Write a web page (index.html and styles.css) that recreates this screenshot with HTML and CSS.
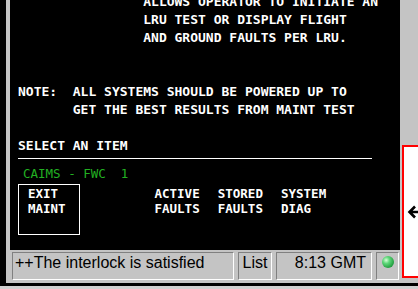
FILE: index.html
```html
<!DOCTYPE html>
<html lang="en">
  <head>
    <meta charset="UTF-8" />
    <meta name="viewport" content="width=device-width, initial-scale=1.0" />
    <title>CAIMS Maint</title>
    <link rel="stylesheet" href="styles.css">
  </head>
  <body>
    <div class="app">
      <div class="main">
        <div class="edge"></div>
        <div class="console">
          <div class="screen">
<pre class="text">                ALLOWS OPERATOR TO INITIATE AN
                LRU TEST OR DISPLAY FLIGHT
                AND GROUND FAULTS PER LRU.


NOTE:  ALL SYSTEMS SHOULD BE POWERED UP TO
       GET THE BEST RESULTS FROM MAINT TEST

SELECT AN ITEM</pre>
            <div class="rule"></div>
            <div class="unit">CAIMS - FWC  1</div>
            <div class="keys">
              <div class="key selected">EXIT<br>MAINT</div>
              <div class="key"></div>
              <div class="key">ACTIVE<br>FAULTS</div>
              <div class="key">STORED<br>FAULTS</div>
              <div class="key">SYSTEM<br>DIAG</div>
            </div>
          </div>
          <div class="status">
            <div class="field message">++The interlock is satisfied</div>
            <div class="field list">List</div>
            <div class="field clock">8:13 GMT</div>
            <div class="field lamp"><span class="led"></span></div>
          </div>
        </div>
        <div class="side">
          <div class="alert">
            <svg width="18" height="14" viewBox="0 0 18 14">
              <path d="M8 1.5 L2.5 7 L8 12.5 M2.5 7 H18" fill="none" stroke="#000" stroke-width="2.6" />
            </svg>
          </div>
        </div>
      </div>
      <div class="divider"></div>
      <div class="foot"></div>
    </div>
  </body>
</html>
```
FILE: styles.css
```css
* {
  box-sizing: border-box;
  margin: 0;
  padding: 0;
}

body {
  background: #000;
  width: 418px;
  height: 289px;
  overflow: hidden;
  font-family: "Liberation Sans", Arial, sans-serif;
}

.app {
  display: flex;
  flex-direction: column;
  height: 289px;
}

.main {
  display: flex;
  height: 283px;
}

.edge {
  width: 6px;
  background: #000;
}

.console {
  width: 394px;
  background: #c4c4c4;
  padding-left: 4px;
  display: flex;
  flex-direction: column;
}

.screen {
  height: 250px;
  background: #000;
  color: #fff;
  padding-left: 8px;
  font-family: "DejaVu Sans Mono", monospace;
  overflow: hidden;
}

.text {
  margin-top: -7px;
  font-family: inherit;
  font-size: 13px;
  font-weight: bold;
  line-height: 18px;
  white-space: pre;
}

.rule {
  margin-top: 3px;
  width: 354px;
  height: 1px;
  background: #fff;
}

.unit {
  margin-top: 7px;
  padding-left: 5px;
  color: #22b022;
  font-size: 12.5px;
  line-height: 15px;
  white-space: pre;
}

.keys {
  margin-top: 3px;
  display: grid;
  grid-template-columns: repeat(5, 63.25px);
}

.key {
  width: 62px;
  height: 51px;
  padding: 1px 0 0 9px;
  border: 1px solid transparent;
  font-size: 12.5px;
  font-weight: bold;
  line-height: 15px;
}

.key.selected {
  border-color: #fff;
}

.status {
  height: 33px;
  display: flex;
  gap: 4px;
  padding: 2px 1px 0 2px;
}

.field {
  height: 28px;
  border: 1px solid;
  border-color: #808080 #fff #fff #808080;
  font-size: 16px;
  line-height: 20px;
  color: #000;
  white-space: nowrap;
}

.message {
  width: 222px;
  padding-left: 2px;
}

.list {
  width: 34px;
  text-align: center;
}

.clock {
  width: 96px;
  text-align: right;
  padding-right: 5px;
}

.lamp {
  width: 23px;
  display: flex;
  justify-content: center;
  padding-top: 3px;
}

.led {
  width: 12px;
  height: 12px;
  border-radius: 50%;
  background: radial-gradient(circle at 35% 35%, #d8ffd8 0, #5fd87a 30%, #1f9a3c 75%, #0e6a24 100%);
}

.side {
  width: 18px;
  background: #c4c4c4;
  padding: 145px 0 0 2px;
  overflow: hidden;
}

.alert {
  width: 30px;
  height: 133px;
  border: 2px solid #f00;
  background: #fff;
  display: flex;
  align-items: center;
  padding-left: 3px;
}

.divider {
  height: 3px;
  background: #000;
}

.foot {
  flex: 1;
  background: #d0d0d0;
}
```
